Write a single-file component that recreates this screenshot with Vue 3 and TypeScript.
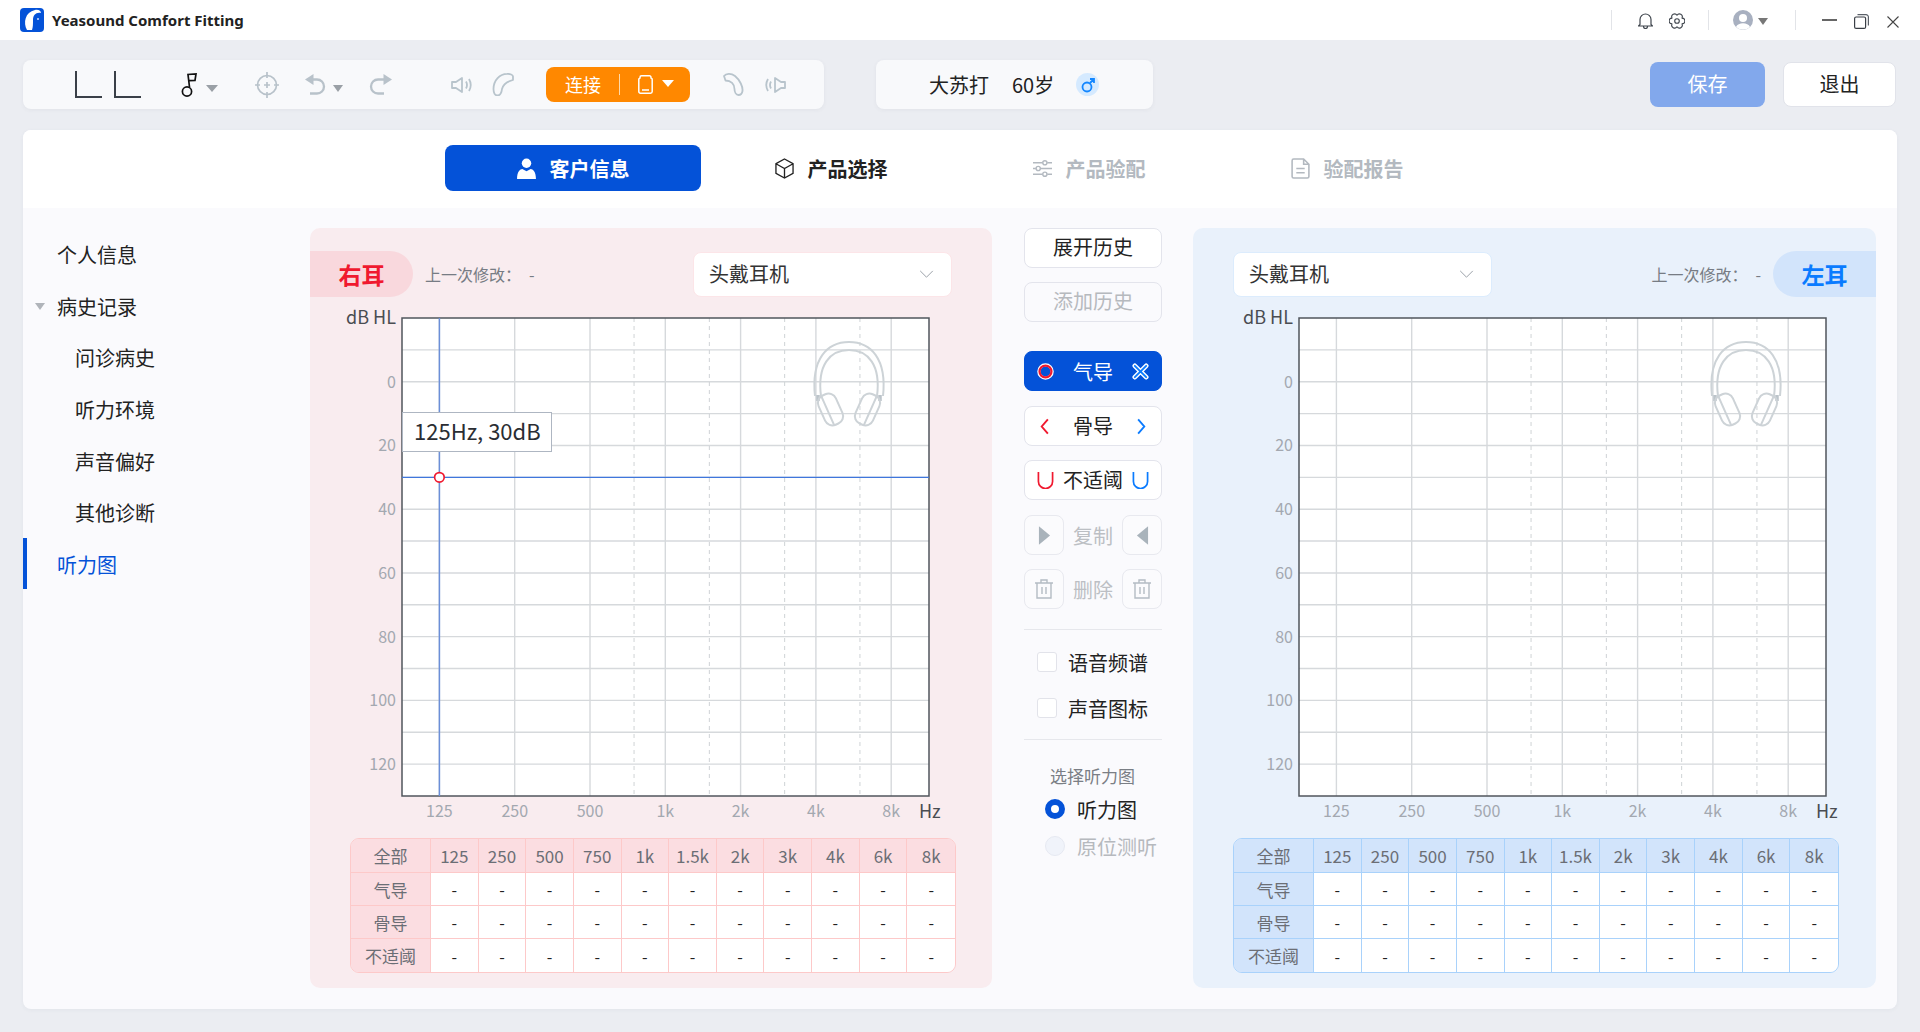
<script setup lang="ts">
interface Ear { key: string; name: string }
const ears: Ear[] = [
  { key: 'right', name: '右耳' },
  { key: 'left', name: '左耳' },
]
const nav = [
  { t: '个人信息', cls: '' },
  { t: '病史记录', cls: 'group' },
  { t: '问诊病史', cls: 'sub' },
  { t: '听力环境', cls: 'sub' },
  { t: '声音偏好', cls: 'sub' },
  { t: '其他诊断', cls: 'sub' },
  { t: '听力图', cls: 'active' },
]
const W = 527
const H = 478
const step = 75.3
const base = 37.4
const rowH = H / 15
const ticks = ['125', '250', '500', '1k', '2k', '4k', '8k']
const solid = ticks.map((_, i) => base + i * step)
const dashed = [2, 3, 4, 5].map((i) => base + i * step + step * 0.585)
const hLines = Array.from({ length: 14 }, (_, i) => (i + 1) * rowH)
const dbs = [0, 20, 40, 60, 80, 100, 120]
const heads = ['125', '250', '500', '750', '1k', '1.5k', '2k', '3k', '4k', '6k', '8k']
const rows = ['气导', '骨导', '不适阈']
</script>

<template>
  <div class="page">
    <header class="titlebar">
      <svg class="logo" viewBox="0 0 24 24">
        <rect width="24" height="24" rx="4" fill="#0452d8" />
        <path d="M7 22C3 15 5 4 15 2c4-.6 6 1 6 3-5-1-8 2-8 7 0 4 0 7-1 10z" fill="#fff" />
        <circle cx="18" cy="11" r="1" fill="#cfe0ff" />
      </svg>
      <span class="apptitle">Yeasound Comfort Fitting</span>
      <i class="tsep first"></i>
      <svg class="ti bell" viewBox="0 0 15 16" fill="none" stroke="#3f454d" stroke-width="1.200">
        <path d="M2 11.500V6.500a5.500 5.500 0 0 1 11 0v5l1.500 1.500H.5zM5.500 13.500a2 2 0 0 0 4 0" stroke-linejoin="round" />
      </svg>
      <svg class="ti gear" viewBox="0 0 16 16" fill="none" stroke="#3f454d" stroke-width="1.100" stroke-linejoin="round">
        <path d="M8 2.200A2.900 2.900 0 0 1 13 5.100 2.900 2.900 0 0 1 13 10.900 2.900 2.900 0 0 1 8 13.800 2.900 2.900 0 0 1 3 10.900 2.900 2.900 0 0 1 3 5.100 2.900 2.900 0 0 1 8 2.200z" />
        <circle cx="8" cy="8" r="2.300" />
      </svg>
      <i class="tsep s2"></i>
      <svg class="ti user" viewBox="0 0 20 20">
        <circle cx="10" cy="10" r="10" fill="#a8b0c0" />
        <circle cx="10" cy="8" r="4" fill="#fff" />
        <path d="M3 17c2-5 12-5 14 0a10 10 0 0 1-14 0z" fill="#fff" />
      </svg>
      <i class="caret small"></i>
      <i class="tsep s3"></i>
      <i class="minimize"></i>
      <svg class="ti restore" viewBox="0 0 15 15" fill="none" stroke="#3a3f46" stroke-width="1.200">
        <rect x=".6" y="3" width="11" height="11.400" rx="1.500" />
        <path d="M3.500 .7h8.500a2.400 2.400 0 0 1 2.400 2.400V11.500" stroke="#5a6068" />
      </svg>
      <svg class="ti close" viewBox="0 0 12 12" fill="none" stroke="#444" stroke-width="1.100"><path d="M.5 .5l11 11M11.500 .5l-11 11" /></svg>
    </header>

    <section class="toolrow">
      <div class="tools">
        <svg class="lshape" viewBox="0 0 27 27" fill="none" stroke="#3a4048" stroke-width="2"><path d="M1 0V26H27" /></svg>
        <svg class="lshape two" viewBox="0 0 27 27" fill="none" stroke="#3a4048" stroke-width="2"><path d="M1 0V26H27" /></svg>
        <svg class="note" viewBox="0 0 16 24" fill="none" stroke="#111" stroke-width="1.700">
          <circle cx="6" cy="18.500" r="4.600" />
          <path d="M8.500 14L7 1.500 15 1l-1 6.500-6 .2" />
        </svg>
        <i class="caret gap9"></i>
        <svg class="target" viewBox="0 0 24 26" fill="none" stroke="#b8c2ca" stroke-width="1.700">
          <circle cx="12" cy="13" r="9.500" />
          <path d="M12 0v6M12 20v6M0 13h5M19 13h5M9 13h6M12 10v6" />
        </svg>
        <svg class="undo" viewBox="0 0 24 21" fill="none" stroke="#b8c2ca" stroke-width="2.300">
          <path d="M9.500 0L1 5.500l8.500 5.500z" fill="#b8c2ca" stroke="none" />
          <path d="M8 5.500h5a7 7 0 0 1 0 14H6" />
        </svg>
        <i class="caret gap6"></i>
        <svg class="redo" viewBox="0 0 24 21" fill="none" stroke="#b8c2ca" stroke-width="2.300">
          <path d="M14.500 0L23 5.500 14.500 11z" fill="#b8c2ca" stroke="none" />
          <path d="M16 5.500h-7a7 7 0 0 0 0 14h6" />
        </svg>
        <svg class="spk" viewBox="0 0 22 16" fill="none" stroke="#b8c4cc" stroke-width="1.800">
          <path d="M1 5h4l6-4v14l-6-4H1zM15 4.500q2 3.500 0 7M18 2q3.500 6 0 12" stroke-linejoin="round" />
        </svg>
        <svg class="hook" viewBox="0 0 22 23" fill="none" stroke="#b8c4cc" stroke-width="1.800" stroke-linejoin="round">
          <path d="M1.500 16C1.500 7 8 1 15 .9c3-.2 6 1 6 2.600V7c-4 1-9.500 3-11 9-.5 4-1.500 6.500-4.500 6.500-2.500 0-4-2.500-4-6.500z" />
        </svg>
        <div class="connect">
          <span>连接</span>
          <i class="csep"></i>
          <svg class="batt" viewBox="0 0 15 19" fill="none" stroke="#fff" stroke-width="1.500">
            <path d="M3.500 .8h8A1.500 1.500 0 0 1 13 2.300V3A1.500 1.500 0 0 1 14.200 4.500V16.500a1.700 1.700 0 0 1-1.700 1.700h-10A1.700 1.700 0 0 1 .8 16.500V4.500A1.500 1.500 0 0 1 2 3v-.7A1.500 1.500 0 0 1 3.500 .8zM4 15h7" />
          </svg>
          <i class="caret white"></i>
        </div>
        <svg class="hook r" viewBox="0 0 21 23" fill="none" stroke="#b8c4cc" stroke-width="1.800" stroke-linejoin="round">
          <path d="M1 3c2-2.500 7-3 11 0 5 4 8 11 7.500 15-.5 3-2.500 4-4 4-2.500 0-4-3-4-6 0-5-3.500-8.500-9-8.500z" />
        </svg>
        <svg class="spk two" viewBox="0 0 22 16" fill="none" stroke="#b8c4cc" stroke-width="1.800">
          <path d="M21 5h-4l-6-4v14l6-4h4zM7 4.500q-2 3.500 0 7M4 2q-3.500 6 0 12" stroke-linejoin="round" />
        </svg>
      </div>
      <div class="patient">
        <span class="pname">大苏打</span>
        <span class="page-age">60岁</span>
        <span class="male">
          <svg viewBox="0 0 16 16" fill="none" stroke="#1487ff" stroke-width="1.800"><circle cx="7" cy="10" r="4.500" /><path d="M10 6l4-4M10 2h4v4" /></svg>
        </span>
      </div>
      <button class="btn-save">保存</button>
      <button class="btn-exit">退出</button>
    </section>

    <main class="card">
      <nav class="tabs">
        <div class="tab on">
          <svg class="tabicon" viewBox="0 0 18 20" fill="#fff"><circle cx="9" cy="5" r="4.500" /><path d="M0 20c0-7 3-9.500 5-9.500l4 2 4-2c2 0 5 2.500 5 9.500z" /></svg>
          <span>客户信息</span>
        </div>
        <div class="tab dark">
          <svg class="tabicon" viewBox="0 0 20 22" fill="none" stroke="#222" stroke-width="1.400">
            <path d="M10 1l9 5v10l-9 5-9-5V6zM1 6l9 5 9-5M10 11v10" />
          </svg>
          <span>产品选择</span>
        </div>
        <div class="tab muted">
          <svg class="tabicon" viewBox="0 0 20 20" fill="none" stroke="#b3b9c0" stroke-width="1.500">
            <path d="M0 4h10M15 4h5M0 10h3M8 10h12M0 16h10M15 16h5" />
            <circle cx="12.500" cy="4" r="2.200" /><circle cx="5.500" cy="10" r="2.200" /><circle cx="12.500" cy="16" r="2.200" />
          </svg>
          <span>产品验配</span>
        </div>
        <div class="tab muted">
          <svg class="tabicon" viewBox="0 0 18 20" fill="none" stroke="#b3b9c0" stroke-width="1.500">
            <path d="M1 2.500A1.500 1.500 0 0 1 2.500 1H12l5 5v11.500a1.500 1.500 0 0 1-1.500 1.500h-13A1.500 1.500 0 0 1 1 17.500zM12 1v5h5M5 10h8M5 14h8" />
          </svg>
          <span>验配报告</span>
        </div>
      </nav>

      <div class="body">
        <aside class="side">
          <div v-for="n in nav" :key="n.t" class="navitem" :class="n.cls">{{ n.t }}</div>
        </aside>

        <section v-for="ear in ears" :key="ear.key" class="panel" :class="ear.key">
          <div class="phead">
            <div class="badge">{{ ear.name }}</div>
            <span class="modified">上一次修改：<b>-</b></span>
            <div class="select">
              <span>头戴耳机</span>
              <svg viewBox="0 0 16 10" fill="none" stroke="#9aa0a8" stroke-width="1.100"><path d="M1 1l7 7 7-7" /></svg>
            </div>
          </div>
          <div class="chart">
            <svg class="grid" :width="W" :height="H">
              <rect :width="W" :height="H" fill="#fff" />
              <line v-for="y in hLines" :key="'h' + y" x1="0" :x2="W" :y1="y" :y2="y" class="gl" />
              <line v-for="x in solid" :key="'v' + x" :x1="x" :x2="x" y1="0" :y2="H" class="gl" />
              <line v-for="x in dashed" :key="'d' + x" :x1="x" :x2="x" y1="0" :y2="H" class="gd" />
              <g fill="none" stroke="#cdd3d7" stroke-width="2" transform="translate(411 23)">
                <path d="M2 55C-2 18 14 1 36 1s38 17 34 54" />
                <path d="M8 55C4 24 17 9 36 9s32 15 28 46" />
                <path d="M5 54v6M67 54v6" stroke="#bcc4ca" stroke-width="3.500" />
                <g transform="translate(17.500 68.500) rotate(-24)">
                  <rect x="-9.500" y="-16" width="19" height="32" rx="8" />
                  <path d="M-3 -16V16" />
                </g>
                <g transform="translate(54.500 68.500) rotate(24)">
                  <rect x="-9.500" y="-16" width="19" height="32" rx="8" />
                  <path d="M3 -16V16" />
                </g>
              </g>
              <rect :width="W" :height="H" fill="none" class="frame" />
              <text v-for="(d, i) in dbs" :key="'db' + d" x="-6" :y="rowH * 2 + i * rowH * 2 + 6" text-anchor="end" class="tk">{{ d }}</text>
              <text v-for="(t, i) in ticks" :key="'t' + t" :x="solid[i]" :y="H + 21" text-anchor="middle" class="tk">{{ t }}</text>
              <text x="-6" y="6" text-anchor="end" class="unit">dB HL</text>
              <text x="517" :y="H + 22" class="unit">Hz</text>
              <template v-if="ear.key === 'right'">
                <line :x1="solid[0]" :x2="solid[0]" y1="0" :y2="H" stroke="#6b8fd8" stroke-width="1.500" />
                <line x1="0" :x2="W" :y1="rowH * 5" :y2="rowH * 5" stroke="#3f76dc" stroke-width="1.300" />
                <circle :cx="solid[0]" :cy="rowH * 5" r="4.800" fill="#fff" stroke="#f0192f" stroke-width="1.700" />
              </template>
            </svg>
            <div v-if="ear.key === 'right'" class="tooltip">125Hz, 30dB</div>
          </div>
          <div class="tbl">
            <div class="cell hd">全部</div>
            <div v-for="h in heads" :key="h" class="cell hd">{{ h }}</div>
            <template v-for="r in rows" :key="r">
              <div class="cell hd">{{ r }}</div>
              <div v-for="h in heads" :key="r + h" class="cell val">-</div>
            </template>
          </div>
        </section>

        <section class="mid">
          <button class="mbtn lift">展开历史</button>
          <button class="mbtn off add lift">添加历史</button>
          <button class="mbtn air">
            <svg viewBox="0 0 18 18" fill="none"><circle cx="9" cy="9" r="7" stroke="#fff" stroke-width="3.500" /><circle cx="9" cy="9" r="6.300" stroke="#f0192f" stroke-width="2.400" /></svg>
            <span>气导</span>
            <svg viewBox="0 0 18 18" fill="none" stroke-linecap="round"><path d="M3 3l12 12M15 3L3 15" stroke="#fff" stroke-width="5" /><path d="M3 3l12 12M15 3L3 15" stroke="#0a7bff" stroke-width="2" /></svg>
          </button>
          <button class="mbtn row">
            <svg viewBox="0 0 18 18" fill="none" stroke="#f0192f" stroke-width="2"><path d="M11.500 1.500L5 9l6.500 7.500" /></svg>
            <span>骨导</span>
            <svg viewBox="0 0 18 18" fill="none" stroke="#0a7bff" stroke-width="2"><path d="M6.500 1.500L13 9l-6.500 7.500" /></svg>
          </button>
          <button class="mbtn row">
            <svg viewBox="0 0 18 18" fill="none" stroke="#f0192f" stroke-width="1.800"><path d="M1.500 0V10a7.500 7.500 0 0 0 15 0V0" /></svg>
            <span>不适阈</span>
            <svg viewBox="0 0 18 18" fill="none" stroke="#0a7bff" stroke-width="1.800"><path d="M1.500 0V10a7.500 7.500 0 0 0 15 0V0" /></svg>
          </button>
          <div class="pair">
            <button class="sq"><svg viewBox="0 0 14 20" fill="#a9b3bb"><path d="M1 0l12 10L1 20z" /></svg></button>
            <span>复制</span>
            <button class="sq"><svg viewBox="0 0 14 20" fill="#a9b3bb"><path d="M13 0L1 10l12 10z" /></svg></button>
          </div>
          <div class="pair">
            <button class="sq">
              <svg class="trash" viewBox="0 0 18 20" fill="none" stroke="#b4bcc3" stroke-width="1.400"><path d="M0 4h18M6 4V1h6v3M2 4v15h14V4M7 8v7M11 8v7" /></svg>
            </button>
            <span>删除</span>
            <button class="sq">
              <svg class="trash" viewBox="0 0 18 20" fill="none" stroke="#b4bcc3" stroke-width="1.400"><path d="M0 4h18M6 4V1h6v3M2 4v15h14V4M7 8v7M11 8v7" /></svg>
            </button>
          </div>
          <hr class="rule" />
          <label class="check"><i></i><span>语音频谱</span></label>
          <label class="check"><i></i><span>声音图标</span></label>
          <hr class="rule two" />
          <div class="picktitle">选择听力图</div>
          <div class="radio on"><i></i><span>听力图</span></div>
          <div class="radio"><i></i><span>原位测听</span></div>
        </section>
      </div>
    </main>
  </div>
</template>

<style>
html, body { margin: 0; background: #ebedf2; }
</style>

<style scoped>
* { box-sizing: border-box; }
.page {
  width: 1920px; height: 1032px; overflow: hidden; background: #ebedf2;
  font-family: "Noto Sans CJK SC", "Noto Sans", sans-serif; color: #222;
}
button { font-family: inherit; padding: 0; }
i { display: block; font-style: normal; }

.titlebar { height: 40px; background: #fff; display: flex; align-items: center; padding: 0 21px 0 20px; }
.logo { width: 24px; height: 24px; }
.apptitle { margin-left: 8px; font: 700 15px "Noto Sans", sans-serif; color: #222; }
.tsep { width: 1px; height: 20px; background: #e2e4e8; }
.tsep.first { margin-left: auto; }
.tsep.s2 { margin-left: 23px; }
.tsep.s3 { margin-left: 27px; }
.ti { display: block; }
.bell { width: 15px; height: 16px; margin-left: 26px; margin-top: 2px; }
.gear { width: 16px; height: 16px; margin-left: 16px; margin-top: 1px; }
.user { width: 20px; height: 20px; margin-left: 24px; }
.caret { width: 0; height: 0; border-left: 6px solid transparent; border-right: 6px solid transparent; border-top: 7px solid #9aa0a6; }
.caret.small { margin-left: 5px; margin-top: 2px; border-left-width: 5px; border-right-width: 5px; border-top-color: #777; }
.minimize { width: 15px; height: 1.500px; background: #666; margin-left: 26px; }
.restore { width: 15px; height: 15px; margin-left: 17px; margin-top: 2px; }
.close { width: 12px; height: 12px; margin-left: 18px; margin-top: 3px; }

.toolrow { display: flex; align-items: center; padding: 20px 24px 0 23px; height: 69px; }
.tools { width: 801px; height: 49px; background: #f8f9fb; border-radius: 8px; display: flex; align-items: center; padding-left: 52px; box-shadow: 0 1px 4px rgba(60, 70, 90, .06); }
.lshape { width: 27px; height: 27px; }
.lshape.two { margin-left: 12px; }
.note { width: 16px; height: 24px; margin-left: 40px; }
.gap9 { margin-left: 9px; margin-top: 8px; }
.target { width: 24px; height: 26px; margin-left: 37px; }
.undo { width: 24px; height: 21px; margin-left: 25px; }
.gap6 { margin-left: 5px; margin-top: 8px; border-left-width: 5.500px; border-right-width: 5.500px; }
.redo { width: 24px; height: 21px; margin-left: 26px; }
.spk { width: 22px; height: 16px; margin-left: 58px; }
.spk.two { margin-left: 20px; }
.hook { width: 22px; height: 23px; margin-left: 19px; }
.hook.r { width: 21px; margin-left: 33px; }
.connect { width: 144px; height: 35px; margin-left: 32px; background: #ff8800; border-radius: 8px; display: flex; align-items: center; color: #fff; font-size: 18px; padding-left: 19px; }
.connect span { padding-bottom: 2px; }
.csep { width: 1px; height: 21px; background: #ffd9a8; margin-left: 18px; }
.batt { width: 15px; height: 19px; margin-left: 18px; }
.caret.white { border-top-color: #fff; margin-left: 9px; margin-top: -3px; }

.patient { width: 277px; height: 49px; margin-left: 52px; background: #f8f9fb; border-radius: 8px; display: flex; align-items: center; font-size: 20px; padding-left: 53px; color: #222; box-shadow: 0 1px 4px rgba(60, 70, 90, .06); }
.page-age { margin-left: 23px; }
.male { width: 23px; height: 23px; margin-left: 22px; border-radius: 50%; background: #d5eaff; display: flex; align-items: center; justify-content: center; }
.male svg { width: 16px; height: 16px; }
.btn-save { width: 115px; height: 45px; margin-left: auto; border: 0; border-radius: 8px; background: #82a8ec; color: #fff; font-size: 20px; padding-bottom: 3px; }
.btn-exit { width: 113px; height: 45px; margin-left: 18px; border: 1px solid #e1e3ea; border-radius: 8px; background: #fff; color: #222; font-size: 20px; padding-bottom: 3px; }

.card { width: 1874px; height: 879px; margin: 21px 0 0 23px; background: #fafafd; border-radius: 8px; overflow: hidden; box-shadow: 0 1px 4px rgba(60, 70, 90, .05); }
.tabs { height: 78px; background: #fff; display: grid; grid-template-columns: repeat(4, 256px); column-gap: 2px; justify-content: center; padding-top: 15px; align-items: start; }
.tab { height: 46px; border-radius: 8px; display: flex; align-items: center; justify-content: center; gap: 14px; font-size: 20px; font-weight: 700; }
.tab.on { background: #0452d8; color: #fff; }
.tab.dark { color: #222; }
.tab.muted { color: #b3b9c0; }
.tabicon { width: 19px; height: 21px; }

.body { display: flex; padding-top: 20px; }
.side { width: 287px; padding-top: 1px; }
.navitem { position: relative; height: 51.700px; line-height: 52px; padding-left: 34px; font-size: 20px; color: #222; }
.navitem.sub { padding-left: 52px; }
.navitem.group::before { content: ""; position: absolute; left: 12px; top: 22px; border-left: 5.500px solid transparent; border-right: 5.500px solid transparent; border-top: 7px solid #b0b4ba; }
.navitem.active { color: #0452d8; }
.navitem.active::before { content: ""; position: absolute; left: 0; top: -1px; width: 4px; height: 51px; background: #0452d8; }

.panel { width: 682px; height: 760px; border-radius: 10px; padding-top: 23px; }
.panel.right { background: #f9ecef; order: 1; }
.panel.left { background: #e9f1fb; order: 3; width: 683px; }
.phead { display: flex; align-items: center; height: 46px; }
.panel.left .phead { flex-direction: row-reverse; }
.badge { width: 103px; height: 46px; display: flex; align-items: center; justify-content: center; font-size: 23px; font-weight: 700; }
.panel.right .badge { background: #f9d8dd; color: #f0192f; border-radius: 0 23px 23px 0; }
.panel.left .badge { background: #d2e4fb; color: #0a7bff; border-radius: 23px 0 0 23px; }
.modified { font-size: 16px; color: #777c84; margin-left: 12px; white-space: nowrap; }
.modified b { font-weight: 400; margin-left: 8px; }
.panel.left .modified { margin: 0 12px 0 0; }
.select { width: 259px; height: 45px; background: #fff; border-radius: 8px; display: flex; align-items: center; justify-content: space-between; padding: 0 17px 2px 15px; font-size: 20px; color: #333; }
.select svg { width: 15px; height: 9px; margin-top: 2px; }
.panel.right .select { margin-left: auto; margin-right: 40px; border: 1px solid #fce5e8; }
.panel.left .select { margin-right: auto; margin-left: 40px; border: 1px solid #dcecfd; }

.chart { position: relative; width: 527px; height: 478px; margin-top: 21px; }
.panel.right .chart { margin-left: 92px; }
.panel.left .chart { margin-left: 106px; }
.grid { display: block; overflow: visible; }
.gl { stroke: #d6d9dc; stroke-width: 1.400; }
.gd { stroke: #cfd3d6; stroke-width: 1; stroke-dasharray: 4 4; }
.frame { stroke: #50555c; stroke-width: 1.500; }
.tk { font-size: 16px; fill: #a3a8b0; }
.unit { font-size: 18px; fill: #4a4d52; }
.tooltip { position: absolute; left: 0; top: 94px; width: 150px; height: 40px; background: #fff; border: 1px solid #aeb6c2; padding-left: 11px; line-height: 35px; font-size: 22px; color: #2a2d33; white-space: nowrap; }

.tbl { width: 606px; margin: 42px 0 0 40px; display: grid; grid-template-columns: 80px repeat(11, 1fr); grid-template-rows: 34px 33px 33px 33px; border-radius: 9px; overflow: hidden; border: 1px solid; }
.panel.right .tbl { border-color: #fdc9c9; }
.panel.left .tbl { border-color: #a9d2fb; }
.cell { display: flex; align-items: center; justify-content: center; border-right: 1px solid; border-bottom: 1px solid; font-size: 17px; color: #6b6e75; }
.cell:nth-child(12n) { border-right: 0; }
.cell:nth-last-child(-n + 12) { border-bottom: 0; }
.panel.right .cell { border-color: #fdc9c9; }
.panel.left .cell { border-color: #a9d2fb; }
.panel.right .hd { background: #fbdde1; }
.panel.left .hd { background: #d2e4fb; }
.val { background: #fff; color: #222; font-size: 16px; }

.mid { order: 2; width: 138px; margin: 0 31px 0 32px; display: flex; flex-direction: column; }
.mbtn { width: 138px; height: 40px; flex: none; background: #fff; border: 1px solid #e3e4ec; border-radius: 8px; font-size: 20px; color: #222; display: flex; align-items: center; justify-content: center; }
.mbtn.lift { padding-bottom: 3px; }
.mbtn.off { color: #b6b9be; background: #fafafd; }
.mbtn.add { margin-top: 14px; }
.mbtn.air { margin-top: 29px; background: #0452d8; border-color: #0452d8; color: #fff; justify-content: space-between; padding: 0 12px; }
.mbtn.row { margin-top: 15px; justify-content: space-between; padding: 0 12px 2px; }
.mbtn svg { width: 17px; height: 17px; flex: none; }
.mbtn.row svg { margin-top: 2px; }
.mbtn.row + .mbtn.row { margin-top: 14px; }
.pair { height: 40px; flex: none; margin-top: 15px; display: flex; align-items: center; justify-content: space-between; font-size: 20px; color: #bcbfc4; }
.pair + .pair { margin-top: 14px; }
.sq { width: 40px; height: 40px; background: #fbfbfd; border: 1px solid #e8e9ef; border-radius: 8px; display: flex; align-items: center; justify-content: center; }
.sq svg { width: 13px; height: 19px; }
.sq .trash { width: 18px; height: 20px; }
.rule { width: 100%; height: 1px; border: 0; background: #e6e7ec; margin: 20px 0 0; flex: none; }
.check { display: flex; align-items: center; height: 20px; margin: 22px 0 0 13px; font-size: 20px; color: #222; }
.check i { width: 20px; height: 20px; background: #fff; border: 1px solid #e2e3ea; border-radius: 3px; }
.check span { margin-left: 11px; }
.check + .check { margin-top: 26px; }
.rule.two { margin-top: 21px; }
.picktitle { margin: 24px 0 0 26px; height: 24px; line-height: 24px; font-size: 17px; color: #7a7e85; }
.radio { display: flex; align-items: center; height: 20px; margin: 11px 0 0 21px; font-size: 20px; color: #222; white-space: nowrap; }
.radio i { width: 20px; height: 20px; border-radius: 50%; background: #f0f3fa; border: 1px solid #e6e9f2; }
.radio.on i { background: #fff; border: 6px solid #0452d8; }
.radio span { margin-left: 12px; }
.radio + .radio { margin-top: 17px; color: #b6b9be; }
</style>
